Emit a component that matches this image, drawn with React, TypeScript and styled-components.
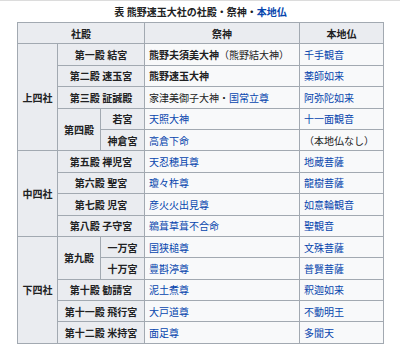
import React from 'react';
import styled, { createGlobalStyle } from 'styled-components';

const GlobalStyle = createGlobalStyle`
  html, body {
    margin: 0;
    background: #ffffff;
  }
  body {
    font-family: "Noto Sans CJK JP", "Noto Sans", sans-serif;
    color: #202122;
  }
`;

const Page = styled.div`
  width: 400px;
  height: 358px;
  box-sizing: border-box;
  border-top: 1px solid #dcdcdc;
  padding: 0 0 0 17px;
  overflow: hidden;
`;

const Table = styled.table`
  width: 366px;
  border-collapse: collapse;
  table-layout: fixed;
  font-size: 10px;
  line-height: 13px;
  background: #f8f9fa;
  border: 1px solid #a2a9b1;
`;

const Caption = styled.caption`
  font-weight: bold;
  font-size: 10px;
  line-height: 13px;
  padding: 4px 0 4px;
  text-align: center;
`;

const Row = styled.tr`
  height: 21.4px;
`;

const HeadCell = styled.th`
  background: #eaecf0;
  border: 1px solid #a2a9b1;
  font-weight: bold;
  text-align: center;
  padding: 0 2px;
  white-space: nowrap;
`;

const DataCell = styled.td`
  border: 1px solid #a2a9b1;
  padding: 0 4px;
  text-align: left;
  white-space: nowrap;
`;

const WikiLink = styled.a`
  color: #0645ad;
  text-decoration: none;
`;

const Strong = styled.b`
  font-weight: bold;
`;

const App = () => {
  return (
    <Page>
      <GlobalStyle />
      <Table>
        <Caption>
          表 熊野速玉大社の社殿・祭神・<WikiLink>本地仏</WikiLink>
        </Caption>
        <colgroup>
          <col style={{ width: 40 }} />
          <col style={{ width: 43 }} />
          <col style={{ width: 44 }} />
          <col style={{ width: 155 }} />
          <col style={{ width: 84 }} />
        </colgroup>
        <tbody>
          <Row>
            <HeadCell colSpan={3}>社殿</HeadCell>
            <HeadCell>祭神</HeadCell>
            <HeadCell>本地仏</HeadCell>
          </Row>
          <Row>
            <HeadCell rowSpan={5}>上四社</HeadCell>
            <HeadCell colSpan={2}>第一殿 結宮</HeadCell>
            <DataCell>
              <Strong>熊野夫須美大神</Strong>（熊野結大神）
            </DataCell>
            <DataCell><WikiLink>千手観音</WikiLink></DataCell>
          </Row>
          <Row>
            <HeadCell colSpan={2}>第二殿 速玉宮</HeadCell>
            <DataCell><Strong>熊野速玉大神</Strong></DataCell>
            <DataCell><WikiLink>薬師如来</WikiLink></DataCell>
          </Row>
          <Row>
            <HeadCell colSpan={2}>第三殿 証誠殿</HeadCell>
            <DataCell>
              家津美御子大神・<WikiLink>国常立尊</WikiLink>
            </DataCell>
            <DataCell><WikiLink>阿弥陀如来</WikiLink></DataCell>
          </Row>
          <Row>
            <HeadCell rowSpan={2}>第四殿</HeadCell>
            <HeadCell>若宮</HeadCell>
            <DataCell><WikiLink>天照大神</WikiLink></DataCell>
            <DataCell><WikiLink>十一面観音</WikiLink></DataCell>
          </Row>
          <Row>
            <HeadCell>神倉宮</HeadCell>
            <DataCell><WikiLink>高倉下命</WikiLink></DataCell>
            <DataCell>（本地仏なし）</DataCell>
          </Row>
          <Row>
            <HeadCell rowSpan={4}>中四社</HeadCell>
            <HeadCell colSpan={2}>第五殿 禅児宮</HeadCell>
            <DataCell><WikiLink>天忍穂耳尊</WikiLink></DataCell>
            <DataCell><WikiLink>地蔵菩薩</WikiLink></DataCell>
          </Row>
          <Row>
            <HeadCell colSpan={2}>第六殿 聖宮</HeadCell>
            <DataCell><WikiLink>瓊々杵尊</WikiLink></DataCell>
            <DataCell><WikiLink>龍樹菩薩</WikiLink></DataCell>
          </Row>
          <Row>
            <HeadCell colSpan={2}>第七殿 児宮</HeadCell>
            <DataCell><WikiLink>彦火火出見尊</WikiLink></DataCell>
            <DataCell><WikiLink>如意輪観音</WikiLink></DataCell>
          </Row>
          <Row>
            <HeadCell colSpan={2}>第八殿 子守宮</HeadCell>
            <DataCell><WikiLink>鵜葺草葺不合命</WikiLink></DataCell>
            <DataCell><WikiLink>聖観音</WikiLink></DataCell>
          </Row>
          <Row>
            <HeadCell rowSpan={5}>下四社</HeadCell>
            <HeadCell rowSpan={2}>第九殿</HeadCell>
            <HeadCell>一万宮</HeadCell>
            <DataCell><WikiLink>国狭槌尊</WikiLink></DataCell>
            <DataCell><WikiLink>文殊菩薩</WikiLink></DataCell>
          </Row>
          <Row>
            <HeadCell>十万宮</HeadCell>
            <DataCell><WikiLink>豊斟渟尊</WikiLink></DataCell>
            <DataCell><WikiLink>普賢菩薩</WikiLink></DataCell>
          </Row>
          <Row>
            <HeadCell colSpan={2}>第十殿 勧請宮</HeadCell>
            <DataCell><WikiLink>泥土煮尊</WikiLink></DataCell>
            <DataCell><WikiLink>釈迦如来</WikiLink></DataCell>
          </Row>
          <Row>
            <HeadCell colSpan={2}>第十一殿 飛行宮</HeadCell>
            <DataCell><WikiLink>大戸道尊</WikiLink></DataCell>
            <DataCell><WikiLink>不動明王</WikiLink></DataCell>
          </Row>
          <Row>
            <HeadCell colSpan={2}>第十二殿 米持宮</HeadCell>
            <DataCell><WikiLink>面足尊</WikiLink></DataCell>
            <DataCell><WikiLink>多聞天</WikiLink></DataCell>
          </Row>
        </tbody>
      </Table>
    </Page>
  );
};

export default App;
